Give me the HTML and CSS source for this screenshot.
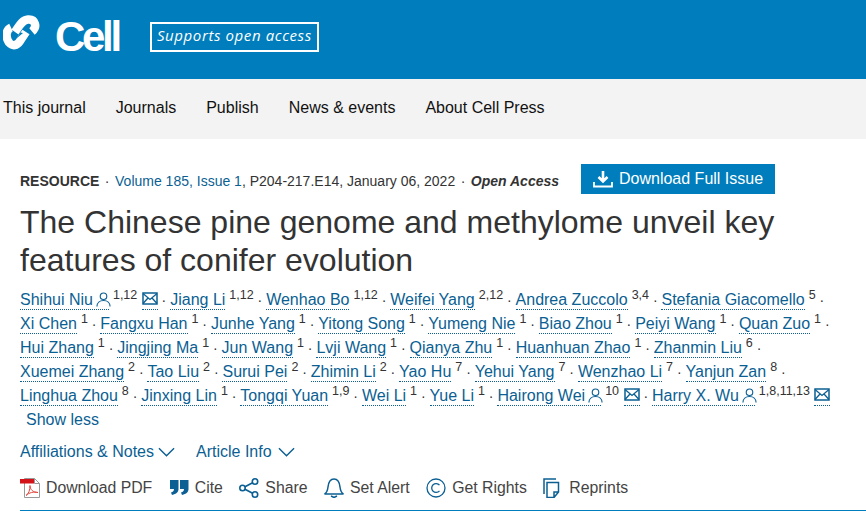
FILE: index.html
```html
<!DOCTYPE html>
<html lang="en">
<head>
  <meta charset="UTF-8" />
  <title>The Chinese pine genome and methylome unveil key features of conifer evolution</title>
  <link rel="stylesheet" href="styles.css">
</head>
<body>
  <!-- Brand bar -->
  <header class="brand-bar">
    <svg class="brand-mark" viewBox="0 0 38 36" aria-hidden="true">
      <g fill="none" stroke="#fff" stroke-width="8.500">
        <path d="M29 16.500C34.500 12 32.500 4 25 4.500C19 5 16.500 10.500 12 17"/>
        <path d="M8 12.500C2.500 15 2.500 22.500 6 27.500C11 33 15.500 29 18 24.500L23 17"/>
      </g>
      <path d="M20 18L13.500 23.500L17.500 17.500z" fill="#007dbc"/>
    </svg>
    <span class="brand-name">Cell</span>
    <span class="brand-tag">Supports open access</span>
  </header>

  <!-- Main nav -->
  <nav class="main-nav">
    <a href="#">This journal</a>
    <a href="#">Journals</a>
    <a href="#">Publish</a>
    <a href="#">News &amp; events</a>
    <a href="#">About Cell Press</a>
  </nav>

  <main class="article">
    <div class="meta-row">
      <span class="meta-text">
        <span class="article-type">RESOURCE</span><span class="dot">·</span><a href="#">Volume 185, Issue 1</a>, P204-217.E14, January 06, 2022<span class="dot">·</span><span class="open-access">Open Access</span>
      </span>
      <a class="download-btn" href="#">
        <svg viewBox="0 0 20 18" aria-hidden="true">
          <path d="M10 1v10M5.500 7l4.500 4.500L14.500 7" fill="none" stroke="#fff" stroke-width="2.600"/>
          <path d="M1 12v4.500h18V12" fill="none" stroke="#fff" stroke-width="1.800"/>
        </svg>
        <span>Download Full Issue</span>
      </a>
    </div>

    <h1>The Chinese pine genome and methylome unveil key features of conifer evolution</h1>

    <!-- Authors -->
    <ul class="authors">
      <li><a href="#">Shihui Niu<svg class="ico-person" viewBox="0 0 16 16"><use href="#person"/></svg></a><sup>1,12</sup> <a class="mail" href="#"><svg class="ico-mail" viewBox="0 0 16 13"><use href="#mail"/></svg></a></li>
      <li><a href="#">Jiang Li</a><sup>1,12</sup></li>
      <li><a href="#">Wenhao Bo</a><sup>1,12</sup></li>
      <li><a href="#">Weifei Yang</a><sup>2,12</sup></li>
      <li><a href="#">Andrea Zuccolo</a><sup>3,4</sup></li>
      <li><a href="#">Stefania Giacomello</a><sup>5</sup></li>
      <li><a href="#">Xi Chen</a><sup>1</sup></li>
      <li><a href="#">Fangxu Han</a><sup>1</sup></li>
      <li><a href="#">Junhe Yang</a><sup>1</sup></li>
      <li><a href="#">Yitong Song</a><sup>1</sup></li>
      <li><a href="#">Yumeng Nie</a><sup>1</sup></li>
      <li><a href="#">Biao Zhou</a><sup>1</sup></li>
      <li><a href="#">Peiyi Wang</a><sup>1</sup></li>
      <li><a href="#">Quan Zuo</a><sup>1</sup></li>
      <li><a href="#">Hui Zhang</a><sup>1</sup></li>
      <li><a href="#">Jingjing Ma</a><sup>1</sup></li>
      <li><a href="#">Jun Wang</a><sup>1</sup></li>
      <li><a href="#">Lvji Wang</a><sup>1</sup></li>
      <li><a href="#">Qianya Zhu</a><sup>1</sup></li>
      <li><a href="#">Huanhuan Zhao</a><sup>1</sup></li>
      <li><a href="#">Zhanmin Liu</a><sup>6</sup></li>
      <li><a href="#">Xuemei Zhang</a><sup>2</sup></li>
      <li><a href="#">Tao Liu</a><sup>2</sup></li>
      <li><a href="#">Surui Pei</a><sup>2</sup></li>
      <li><a href="#">Zhimin Li</a><sup>2</sup></li>
      <li><a href="#">Yao Hu</a><sup>7</sup></li>
      <li><a href="#">Yehui Yang</a><sup>7</sup></li>
      <li><a href="#">Wenzhao Li</a><sup>7</sup></li>
      <li><a href="#">Yanjun Zan</a><sup>8</sup></li>
      <li><a href="#">Linghua Zhou</a><sup>8</sup></li>
      <li><a href="#">Jinxing Lin</a><sup>1</sup></li>
      <li><a href="#">Tongqi Yuan</a><sup>1,9</sup></li>
      <li><a href="#">Wei Li</a><sup>1</sup></li>
      <li><a href="#">Yue Li</a><sup>1</sup></li>
      <li><a href="#">Hairong Wei<svg class="ico-person" viewBox="0 0 16 16"><use href="#person"/></svg></a><sup>10</sup> <a class="mail" href="#"><svg class="ico-mail" viewBox="0 0 16 13"><use href="#mail"/></svg></a></li>
      <li class="last"><a href="#">Harry X. Wu<svg class="ico-person" viewBox="0 0 16 16"><use href="#person"/></svg></a><sup>1,8,11,13</sup> <a class="mail" href="#"><svg class="ico-mail" viewBox="0 0 16 13"><use href="#mail"/></svg></a></li>
    </ul>
    <a class="show-less" href="#">Show less</a>

    <div class="info-row">
      <a href="#">Affiliations &amp; Notes<svg viewBox="0 0 18 10"><path d="M1 1l8 8 8-8" fill="none" stroke="#0b5f93" stroke-width="1.500"/></svg></a>
      <a href="#">Article Info<svg viewBox="0 0 18 10"><path d="M1 1l8 8 8-8" fill="none" stroke="#0b5f93" stroke-width="1.500"/></svg></a>
    </div>

    <!-- Article tools -->
    <div class="tools">
      <a href="#">
        <svg class="ico-tool" viewBox="0 0 20 20">
          <path d="M4.500 .500h10l5 5v14h-15z" fill="#fff" stroke="#999"/>
          <path d="M14.500 .500v5h5" fill="none" stroke="#999"/>
          <rect x="0" y="1" width="14" height="4.500" fill="#d3121a"/>
          <path d="M6 17.500c3-2 4-6 4-10 0 4 3 7 8 7-4-1-9 0-12 3z" fill="none" stroke="#e0493f"/>
        </svg>
        <span>Download PDF</span></a>
      <a href="#">
        <svg class="ico-tool" viewBox="0 0 20 20">
          <path d="M1 2h8.500v9c0 3-2 5-6.500 6l-1-2.500c2-.5 3-1.500 3-3.500H1zM11 2h8.500v9c0 3-2 5-6.500 6l-1-2.500c2-.5 3-1.500 3-3.500h-4z" fill="#0b5f93"/>
        </svg>
        <span>Cite</span></a>
      <a href="#">
        <svg class="ico-tool" viewBox="0 0 20 20">
          <g fill="none" stroke="#0b5f93" stroke-width="1.600"><circle cx="3.500" cy="10" r="2.700"/><circle cx="16" cy="3.500" r="2.700"/><circle cx="16" cy="16.500" r="2.700"/><path d="M6 8.700l7.600-4M6 11.300l7.600 4"/></g>
        </svg>
        <span>Share</span></a>
      <a href="#">
        <svg class="ico-tool" viewBox="0 0 20 20">
          <path d="M.5 16c2-1 3-3 3.500-7C4.500 4 7 1 10 1s5.500 3 6 8c.5 4 1.500 6 3.500 7zM7 18l3 1.500 3-1.500" fill="none" stroke="#0b5f93" stroke-width="1.500"/>
        </svg>
        <span>Set Alert</span></a>
      <a href="#">
        <svg class="ico-tool" viewBox="0 0 20 20">
          <g fill="none" stroke="#0b5f93" stroke-width="1.300"><circle cx="10" cy="10" r="9"/><path d="M13.500 7.200a4.400 4.400 0 1 0 0 5.600"/></g>
        </svg>
        <span>Get Rights</span></a>
      <a href="#">
        <svg class="ico-tool" viewBox="0 0 20 20">
          <g fill="none" stroke="#0b5f93" stroke-width="1.500"><path d="M1 16V1h12"/><path d="M4 4.500h11.500V14L11 19.500H4zM15 14h-4v5"/></g>
        </svg>
        <span>Reprints</span></a>
    </div>
  </main>

  <!-- Shared author icons -->
  <svg class="sprite" aria-hidden="true">
    <symbol id="person" viewBox="0 0 16 16">
      <circle cx="8" cy="4.500" r="3.500" fill="none" stroke="#0b5f93" stroke-width="1.200"/>
      <path d="M1 15.500c0-4 3-6.500 7-6.500s7 2.500 7 6.500" fill="none" stroke="#0b5f93" stroke-width="1.200"/>
    </symbol>
    <symbol id="mail" viewBox="0 0 16 13">
      <rect x="1" y="1" width="14" height="11" fill="none" stroke="#0b5f93" stroke-width="1.500"/>
      <path d="M1 1.500l7 6 7-6M1 11.500l5-5.500M15 11.500l-5-5.500" fill="none" stroke="#0b5f93" stroke-width="1.300"/>
    </symbol>
  </svg>
</body>
</html>
```

FILE: styles.css
```css
/* Basic Reset & Body */
* {
  margin: 0;
  padding: 0;
  box-sizing: border-box;
}
body {
  font-family: "Liberation Sans", Arial, sans-serif;
  color: #333;
  background: #fff;
}
a {
  color: #0b5f93;
  text-decoration: none;
}

/* Brand bar */
.brand-bar {
  height: 79px;
  background: #007dbc;
  display: flex;
  align-items: flex-start;
  color: #fff;
}
.brand-mark {
  width: 38px;
  height: 36px;
  margin: 15px 0 0 3px;
}
.brand-name {
  margin: 13px 0 0 14px;
  font-size: 42px;
  line-height: 47px;
  font-weight: 700;
  letter-spacing: -3.300px;
}
.brand-tag {
  margin: 22px 0 0 31px;
  width: 169px;
  height: 30px;
  border: 2px solid #fff;
  font-family: "Open Sans", sans-serif;
  font-style: italic;
  font-size: 15px;
  line-height: 22px;
  text-align: center;
  letter-spacing: 0.6px;
  white-space: nowrap;
}

/* Main nav */
.main-nav {
  height: 60px;
  background: #f3f3f3;
  display: flex;
  align-items: center;
  gap: 30px;
  padding: 0 3px 3px;
}
.main-nav a {
  color: #111;
  font-size: 16px;
}

/* Article header */
.article {
  padding: 25px 0 0 20px;
}
.meta-row {
  display: flex;
  align-items: center;
  height: 30px;
  font-size: 14px;
}
.meta-text {
  padding-top: 4px;
  white-space: nowrap;
}
.article-type {
  font-weight: 700;
}
.dot {
  margin: 0 5.500px;
}
.open-access {
  font-weight: 700;
  font-style: italic;
}
.download-btn {
  margin-left: auto;
  margin-right: 91px;
  width: 194px;
  height: 30px;
  background: #007dbc;
  color: #fff;
  font-size: 16px;
  display: flex;
  align-items: center;
  gap: 6px;
  padding-left: 12px;
  white-space: nowrap;
}
.download-btn svg {
  width: 20px;
  height: 18px;
}
h1 {
  font-weight: 400;
  font-size: 32px;
  line-height: 38px;
  margin-top: 9px;
  width: 800px;
}

/* Authors */
.authors {
  list-style: none;
  margin-top: 9px;
  width: 840px;
  font-size: 16px;
  line-height: 24px;
}
.authors li {
  display: inline;
}
.authors li::after {
  content: " · ";
  font-size: 14px;
}
.authors li.last::after {
  content: "";
}
.authors a {
  border-bottom: 1px dotted #0b5f93;
  padding-bottom: 1px;
  white-space: nowrap;
}
.authors sup {
  font-size: 12.500px;
  line-height: 0;
  margin-left: 4px;
}
.ico-person {
  width: 15px;
  height: 15px;
  margin: 0 -2px 0 3px;
  vertical-align: -2px;
}
.ico-mail {
  width: 16px;
  height: 13px;
  vertical-align: 0;
}
.sprite {
  display: none;
}
.show-less {
  display: block;
  margin-left: 6px;
  font-size: 16px;
  line-height: 24px;
}

/* Affiliations row */
.info-row {
  display: flex;
  gap: 21px;
  margin-top: 8px;
  font-size: 16px;
  line-height: 24px;
}
.info-row svg {
  width: 17px;
  height: 10px;
  margin-left: 4px;
}
.info-row a:last-child svg {
  margin-left: 6px;
}

/* Tools row */
.tools {
  display: flex;
  align-items: center;
  gap: 16.500px;
  height: 45px;
  margin-top: 2px;
  border-bottom: 1px solid #007dbc;
  font-size: 15.800px;
}
.tools a {
  display: flex;
  align-items: center;
  gap: 6px;
  color: #444;
}
.ico-tool {
  width: 20px;
  height: 20px;
}
```
